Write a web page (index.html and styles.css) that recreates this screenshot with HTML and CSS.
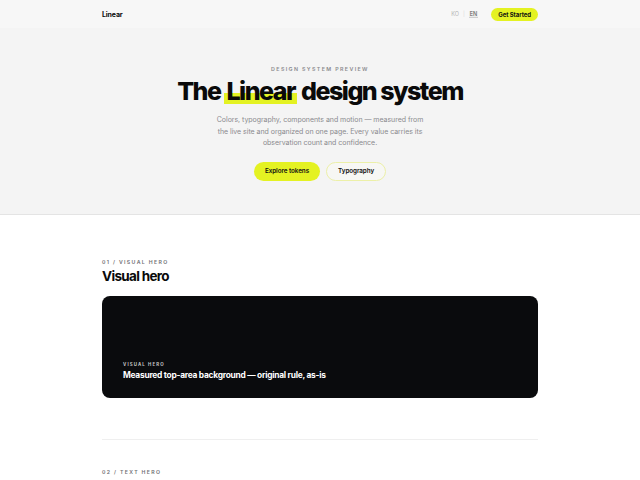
FILE: index.html
```html
<!DOCTYPE html>
<html lang="en">
<head>
<meta charset="utf-8">
<title>Linear design system</title>
<link rel="stylesheet" href="styles.css">
</head>
<body>
<header class="topbar">
  <div class="wrap topbar-inner">
    <div class="logo">Linear</div>
    <div class="top-right">
      <div class="lang">
        <span class="lang-item">KO</span>
        <span class="lang-sep">|</span>
        <span class="lang-item active">EN</span>
      </div>
      <a class="btn-start">Get Started</a>
    </div>
  </div>
</header>
<section class="hero">
  <div class="eyebrow">DESIGN SYSTEM PREVIEW</div>
  <h1 class="title">The <span class="hl">Linear</span> design system</h1>
  <p class="lede">Colors, typography, components and motion — measured from the live site and organized on one page. Every value carries its observation count and confidence.</p>
  <div class="actions">
    <a class="btn btn-primary">Explore tokens</a>
    <a class="btn btn-outline">Typography</a>
  </div>
</section>
<main class="wrap">
  <section class="block">
    <div class="sec-label">01 / VISUAL HERO</div>
    <h2 class="sec-title">Visual hero</h2>
    <div class="dark-card">
      <div class="card-label">VISUAL HERO</div>
      <div class="card-title">Measured top-area background — original rule, as-is</div>
    </div>
  </section>
  <hr class="divider">
  <section class="block block-2">
    <div class="sec-label">02 / TEXT HERO</div>
  </section>
</main>
</body>
</html>
```
FILE: styles.css
```css
* { box-sizing: border-box; }
html, body { margin: 0; padding: 0; }
body {
  font-family: Inter, "Noto Sans", sans-serif;
  background: #ffffff;
  color: #0a0a0a;
  -webkit-font-smoothing: antialiased;
}
.wrap { width: 436px; margin: 0 auto; }
.topbar { background: #f7f7f7; }
.topbar-inner {
  height: 28px;
  display: flex;
  align-items: center;
  justify-content: space-between;
}
.logo { font-size: 7px; font-weight: 700; letter-spacing: -0.02em; }
.top-right { display: flex; align-items: center; gap: 13px; }
.lang { display: flex; align-items: center; gap: 4px; font-size: 5.5px; color: #b4b4b4; }
.lang-sep { color: #d8d8d8; }
.lang-item.active { color: #555; border-bottom: 1px solid #cfcfcf; background: #ececec; padding: 0 1px; }
.btn-start {
  background: #e4f222;
  color: #111;
  font-size: 6px;
  font-weight: 700;
  letter-spacing: -0.01em;
  padding: 4px 7px 3px;
  border-radius: 999px;
  line-height: 6px;
}
.hero {
  background: #f4f4f4;
  border-bottom: 1px solid #e4e4e4;
  text-align: center;
  padding: 37px 0 33px;
}
.eyebrow {
  font-size: 5.3px;
  font-weight: 600;
  letter-spacing: 0.26em;
  color: #8a8a8e;
  line-height: 8px;
}
.title {
  margin: 2px 0 0;
  font-size: 25px;
  line-height: 32px;
  font-weight: 800;
  letter-spacing: -0.06em;
  color: #0a0a0a;
}
.hl {
  background: linear-gradient(to bottom, transparent 58%, #e4f222 58%, #e4f222 92%, transparent 92%);
  padding: 0 2px;
}
.lede {
  width: 214px;
  margin: 7px auto 0;
  font-size: 7px;
  line-height: 11.6px;
  letter-spacing: -0.005em;
  color: #8a8a8e;
}
.actions {
  margin-top: 13px;
  display: flex;
  justify-content: center;
  gap: 6px;
}
.btn {
  display: inline-flex;
  align-items: center;
  height: 19px;
  padding: 0 11px;
  border-radius: 999px;
  font-size: 6.3px;
  font-weight: 600;
  letter-spacing: -0.01em;
  color: #111;
}
.btn-primary { background: #e4f222; }
.btn-outline { border: 1px solid #ecf0a8; background: #f7f7f4; }
.block { padding-top: 43px; }
.sec-label {
  font-size: 5.2px;
  font-weight: 600;
  letter-spacing: 0.26em;
  color: #6f6f73;
  line-height: 8px;
}
.sec-title {
  margin: 1px 0 0;
  font-size: 13.5px;
  line-height: 18px;
  font-weight: 700;
  letter-spacing: -0.05em;
}
.dark-card {
  margin-top: 11px;
  height: 102px;
  background: #0a0b0d;
  border-radius: 8px;
  padding: 0 21px 17px;
  display: flex;
  flex-direction: column;
  justify-content: flex-end;
}
.card-label {
  font-size: 4.4px;
  font-weight: 700;
  letter-spacing: 0.25em;
  color: #c4c4c4;
  line-height: 7px;
}
.card-title {
  margin-top: 1px;
  font-size: 8.4px;
  font-weight: 700;
  color: #ffffff;
  letter-spacing: -0.03em;
  line-height: 12px;
}
.divider {
  margin: 41px 0 0;
  border: 0;
  border-top: 1px solid #efefef;
}
.block-2 { padding-top: 28px; }
```
